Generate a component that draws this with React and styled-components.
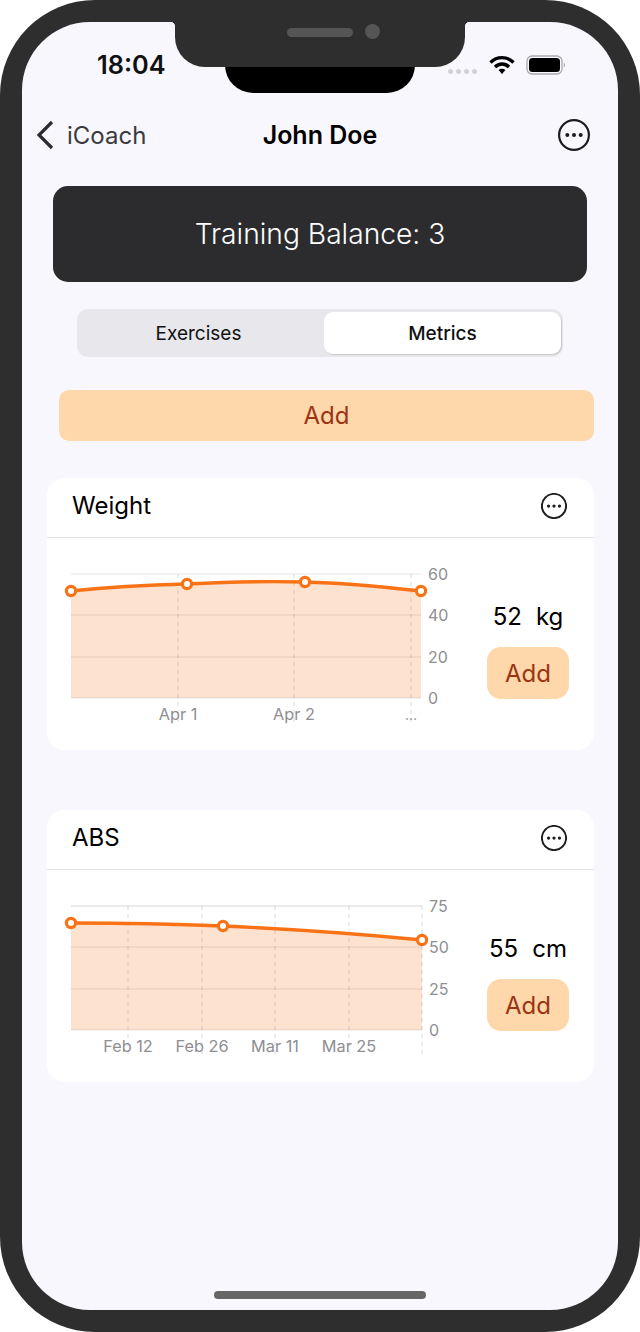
import React from 'react';
import styled, { createGlobalStyle } from 'styled-components';

const GlobalStyle = createGlobalStyle`
  html, body {
    margin: 0;
    padding: 0;
    background: #fff;
  }
  * {
    box-sizing: border-box;
  }
`

const Phone = styled.div`
  position: relative;
  width: 640px;
  height: 1332px;
  padding: 22px;
  background: #2e2e2e;
  border-radius: 95px;
  font-family: Inter, 'Liberation Sans', sans-serif;
`
const Screen = styled.div`
  height: 100%;
  display: flex;
  flex-direction: column;
  background: #f7f7fd;
  border-radius: 68px;
  overflow: hidden;
`
const Sensor = styled.div`
  position: absolute;
  top: 0;
  left: 225px;
  width: 190px;
  height: 93px;
  background: #000;
  border-radius: 0 0 28px 28px;
`
const Notch = styled.div`
  position: absolute;
  top: 0;
  left: 175px;
  width: 290px;
  height: 67px;
  background: #2e2e2e;
  border-radius: 0 0 30px 30px;

  &::before, &::after {
    content: '';
    position: absolute;
    top: 22px;
    width: 5px;
    height: 5px;
  }
  &::before {
    left: -5px;
    background: radial-gradient(circle at 0 100%, transparent 5px, #2e2e2e 5.5px);
  }
  &::after {
    right: -5px;
    background: radial-gradient(circle at 100% 100%, transparent 5px, #2e2e2e 5.5px);
  }
`
const Speaker = styled.div`
  position: absolute;
  top: 28px;
  left: 112px;
  width: 66px;
  height: 9px;
  border-radius: 5px;
  background: #555;
`
const Camera = styled.div`
  position: absolute;
  top: 24px;
  left: 190px;
  width: 15px;
  height: 15px;
  border-radius: 50%;
  background: #555;
`
const StatusBar = styled.div`
  height: 78px;
  padding: 30px 52px 0 75px;
  display: flex;
  align-items: flex-start;
  justify-content: space-between;
`
const Time = styled.div`
  font-size: 25.3px;
  line-height: 26px;
  font-weight: 600;
  color: #111;
`
const StatusIcons = styled.div`
  display: flex;
  align-items: center;
  margin-top: 3px;
`
const Dots = styled.div`
  display: flex;
  gap: 3px;
  margin: 12px 12px 0 0;
`
const Dot = styled.span`
  width: 5px;
  height: 5px;
  border-radius: 50%;
  background: #d1d1d6;
`
const Nav = styled.div`
  height: 70px;
  padding: 0 28px;
  display: grid;
  grid-template-columns: 1fr auto 1fr;
  align-items: center;
`
const BackLink = styled.div`
  display: flex;
  align-items: center;
  gap: 13px;
  margin-left: -14px;
  font-size: 24px;
  color: #3a3a3c;
`
const NavTitle = styled.div`
  font-size: 25px;
  font-weight: 600;
  color: #000;
`
const NavAction = styled.div`
  display: flex;
  justify-content: flex-end;
`
const Balance = styled.div`
  height: 96px;
  margin: 16px 31px 0;
  display: flex;
  align-items: center;
  justify-content: center;
  background: #2c2c2e;
  border-radius: 15px;
  color: #fff;
  font-size: 28.2px;
  font-weight: 300;
`
const Segments = styled.div`
  height: 48px;
  margin: 27px 55px 0;
  padding: 3px 2px 3px 0;
  display: flex;
  background: #e7e7ec;
  border-radius: 11px;
`
const Segment = styled.div`
  width: ${(p) => (p.$active ? '237px' : '247px')};
  padding-right: ${(p) => (p.$active ? '0' : '4px')};
  display: flex;
  align-items: center;
  justify-content: center;
  font-size: 19px;
  font-weight: ${(p) => (p.$active ? '500' : '400')};
  color: #111;
  border-radius: 9px;
  background: ${(p) => (p.$active ? '#fff' : 'transparent')};
  box-shadow: ${(p) => (p.$active ? '1px 1px 1px #c9c9ce' : 'none')};
`
const AddButton = styled.div`
  height: ${(p) => (p.$small ? '52px' : '51px')};
  width: ${(p) => (p.$small ? '82px' : '535px')};
  margin: ${(p) => (p.$small ? '0' : '33px 0 0 37px')};
  display: flex;
  align-items: center;
  justify-content: center;
  background: #fed7aa;
  border-radius: ${(p) => (p.$small ? '14px' : '10px')};
  color: #9a3412;
  font-size: 24px;
`
const Card = styled.div`
  width: 547px;
  height: 272px;
  margin: ${(p) => (p.$first ? '37px' : '60px')} 0 0 25px;
  display: flex;
  flex-direction: column;
  background: #fff;
  border-radius: 17px;
`
const CardHeader = styled.div`
  height: 60px;
  padding: 0 27px 4px 25px;
  display: flex;
  align-items: center;
  justify-content: space-between;
  border-bottom: 1px solid #e3e3e8;
  font-size: 24px;
  color: #000;
`
const CardBody = styled.div`
  flex: 1;
  padding: 22px 25px 0 13px;
  display: flex;
  align-items: flex-start;
  justify-content: space-between;
`
const Chart = styled.svg`
  display: block;
  width: 400px;
  height: 170px;
`
const Side = styled.div`
  width: 82px;
  display: flex;
  flex-direction: column;
  align-items: center;
  gap: 14px;
  margin-top: 39px;
`
const Reading = styled.div`
  height: 34px;
  display: flex;
  align-items: center;
  justify-content: center;
  gap: 14px;
  font-size: 24px;
  color: #000;
  white-space: nowrap;
`
const HomeIndicator = styled.div`
  width: 212px;
  height: 8px;
  margin: auto auto 11px;
  border-radius: 4px;
  background: #666;
`

const MoreIcon = ({ size, stroke }) => (
  <svg width={size} height={size} viewBox="0 0 32 32">
    <circle cx="16" cy="16" r="14.9" fill="none" stroke="#1c1c1e" strokeWidth={stroke} />
    <circle cx="9.3" cy="16" r="2" fill="#1c1c1e" />
    <circle cx="16" cy="16" r="2" fill="#1c1c1e" />
    <circle cx="22.7" cy="16" r="2" fill="#1c1c1e" />
  </svg>
)

const WifiIcon = () => (
  <svg width="26" height="20" viewBox="0 0 26 20">
    <path d="M1.5 7.5C8 1 18 1 24.5 7.5" fill="none" stroke="#000" strokeWidth="3.4" />
    <path d="M6 12C10 8 16 8 20 12" fill="none" stroke="#000" strokeWidth="3.4" />
    <path d="M9.6 15 L13 19 L16.4 15 C14.5 13.4 11.5 13.4 9.6 15Z" fill="#000" />
  </svg>
)

const BatteryIcon = () => (
  <svg width="40" height="20" viewBox="0 0 40 20" style={{ marginLeft: 11 }}>
    <rect x="1" y="1" width="35" height="18" rx="5" fill="none" stroke="#a9a9ad" strokeWidth="1.3" />
    <rect x="3" y="3" width="31" height="14" rx="3.5" fill="#000" />
    <path d="M37.8 7.5 C39.4 8.3 39.4 11.7 37.8 12.5Z" fill="#a9a9ad" />
  </svg>
)

// x/y are page coordinates minus the chart's own corner
const weight = {
  yLabels: ['60', '40', '20', '0'],
  ticks: [
    { x: 118, label: 'Apr 1' },
    { x: 234, label: 'Apr 2' },
    { x: 351, label: '...', small: true },
  ],
  line: 'M11 31 C50 27 88 25 127 24 C166 22 205 21 245 22 C285 23 325 27 361 31',
  points: [[11, 31], [127, 24], [245, 22], [361, 31]],
  right: 361,
  topLine: '#e5e5ea',
}

const abs = {
  yLabels: ['75', '50', '25', '0'],
  ticks: [
    { x: 68, label: 'Feb 12' },
    { x: 142, label: 'Feb 26' },
    { x: 215, label: 'Mar 11' },
    { x: 289, label: 'Mar 25' },
    { x: 362, label: '' },
  ],
  line: 'M11 31 C60 31 115 32 163 34 C230 37 300 42 362 48',
  points: [[11, 31], [163, 34], [362, 48]],
  right: 362,
  topLine: '#d8d8dc',
}

const gridY = [14, 55, 97, 138]

const LineChart = ({ data }) => {
  const { right } = data
  return (
    <Chart viewBox="0 0 400 170" fontFamily="Inter, 'Liberation Sans', sans-serif">
      <path d={`${data.line} L${right} 138 L11 138 Z`} fill="#fde2d0" />
      {gridY.map((y, i) => (
        <line
          key={y}
          x1="11"
          x2={right}
          y1={y}
          y2={y}
          stroke={i === 0 ? data.topLine : 'rgba(90,70,70,0.15)'}
          strokeWidth="1.2"
        />
      ))}
      {data.ticks.map((t) => (
        <g key={t.x}>
          <line x1={t.x} x2={t.x} y1="14" y2="163" stroke="rgba(90,80,80,0.22)" strokeWidth="1" strokeDasharray="4 4" />
          <text x={t.x} y="160" textAnchor="middle" fontSize={t.small ? 14 : 16.3} fill="#8e8e93">{t.label}</text>
        </g>
      ))}
      {data.yLabels.map((l, i) => (
        <text key={l} x={right + 7} y={gridY[i] + 6} fontSize="16" fill="#8e8e93">{l}</text>
      ))}
      <path d={data.line} fill="none" stroke="#f97316" strokeWidth="3.4" />
      {data.points.map(([x, y]) => (
        <circle key={x} cx={x} cy={y} r="4.6" fill="#fff" stroke="#f97316" strokeWidth="3.2" />
      ))}
    </Chart>
  )
}

const MetricCard = ({ title, value, unit, data, first }) => (
  <Card $first={first}>
    <CardHeader>
      {title}
      <MoreIcon size={26} stroke={2.4} />
    </CardHeader>
    <CardBody>
      <LineChart data={data} />
      <Side>
        <Reading>
          <span>{value}</span>
          <span>{unit}</span>
        </Reading>
        <AddButton $small>Add</AddButton>
      </Side>
    </CardBody>
  </Card>
)

const App = () => (
  <Phone>
    <GlobalStyle />
    <Screen>
      <StatusBar>
        <Time>18:04</Time>
        <StatusIcons>
          <Dots>
            <Dot /><Dot /><Dot /><Dot />
          </Dots>
          <WifiIcon />
          <BatteryIcon />
        </StatusIcons>
      </StatusBar>
      <Nav>
        <BackLink>
          <svg width="18" height="30" viewBox="0 0 18 30">
            <path d="M16 2 L3 15 L16 28" fill="none" stroke="#2c2c2e" strokeWidth="3.2" />
          </svg>
          iCoach
        </BackLink>
        <NavTitle>John Doe</NavTitle>
        <NavAction>
          <MoreIcon size={32} stroke={2.2} />
        </NavAction>
      </Nav>
      <Balance>Training Balance: 3</Balance>
      <Segments>
        <Segment>Exercises</Segment>
        <Segment $active>Metrics</Segment>
      </Segments>
      <AddButton>Add</AddButton>
      <MetricCard first title="Weight" value="52" unit="kg" data={weight} />
      <MetricCard title="ABS" value="55" unit="cm" data={abs} />
      <HomeIndicator />
    </Screen>
    <Sensor />
    <Notch>
      <Speaker />
      <Camera />
    </Notch>
  </Phone>
)

export default App;
